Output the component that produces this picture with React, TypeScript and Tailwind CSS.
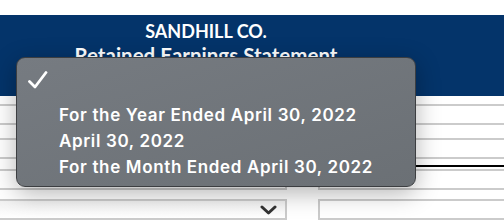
import React from 'react';

const options = [
  'For the Year Ended April 30, 2022',
  'April 30, 2022',
  'For the Month Ended April 30, 2022',
];

const Field: React.FC<{ className?: string }> = ({ className = '' }) => (
  <div className={`h-[21px] border-2 border-[#cbcbcb] bg-white ${className}`} />
);

const App: React.FC = () => {
  return (
    <div className="relative w-[504px] h-[220px] overflow-hidden bg-white font-['Lato',sans-serif]">
      <div className="h-[15px]" />

      {/* Header */}
      <div className="h-[81px] bg-[#04346a] pt-[5px]">
        <div className="w-[412px] text-center text-white font-bold">
          <div className="text-[18px] leading-[22px]">SANDHILL CO.</div>
          <div className="text-[20.5px] leading-[27px]">Retained Earnings Statement</div>
        </div>
      </div>

      {/* Rows */}
      <div className="flex gap-[31px] pt-[8px]">
        <div className="w-[287px] flex flex-col">
          <Field className="border-l-0" />
          <Field className="mt-[13px] border-l-0" />
          <div className="mt-[6px] h-[2px]" />
          <Field className="mt-[2px] border-l-0" />
          <div className="mt-[9px] h-[21px] border-2 border-l-0 border-[#cbcbcb] bg-gradient-to-b from-[#f1f1f1] to-white flex items-center justify-end pr-[8px]">
            <svg width="17" height="10" viewBox="0 0 17 10" fill="none">
              <path d="M2 2 L8.5 8 L15 2" stroke="#333" strokeWidth="3" strokeLinecap="round" strokeLinejoin="round" />
            </svg>
          </div>
        </div>
        <div className="flex-1 flex flex-col">
          <Field className="border-r-0" />
          <Field className="mt-[13px] border-r-0" />
          <div className="mt-[6px] h-[2px] bg-black" />
          <Field className="mt-[2px] border-r-0" />
          <Field className="mt-[9px] border-r-0" />
        </div>
      </div>

      {/* Dropdown menu */}
      <div className="absolute left-[16px] top-[57px] w-[400px] h-[130px] rounded-[9px] border border-[#3c3e41] bg-gradient-to-br from-[#767b81] to-[#6b7075] shadow-[0_6px_24px_rgba(0,0,0,0.3)] pt-[13px] font-['Inter',sans-serif]">
        <div className="h-[26px] pl-[11px] flex items-start">
          <svg width="20" height="18" viewBox="0 0 20 18" fill="none">
            <path d="M1.5 10.5 L7 16 L18 1.5" stroke="white" strokeWidth="2.8" strokeLinecap="round" strokeLinejoin="round" />
          </svg>
        </div>
        <div className="mt-[5px] flex flex-col">
          {options.map((o) => (
            <div key={o} className="h-[26px] leading-[26px] pl-[42px] text-white text-[17px] tracking-[0.65px] font-semibold">
              {o}
            </div>
          ))}
        </div>
      </div>
    </div>
  );
};

export default App;
